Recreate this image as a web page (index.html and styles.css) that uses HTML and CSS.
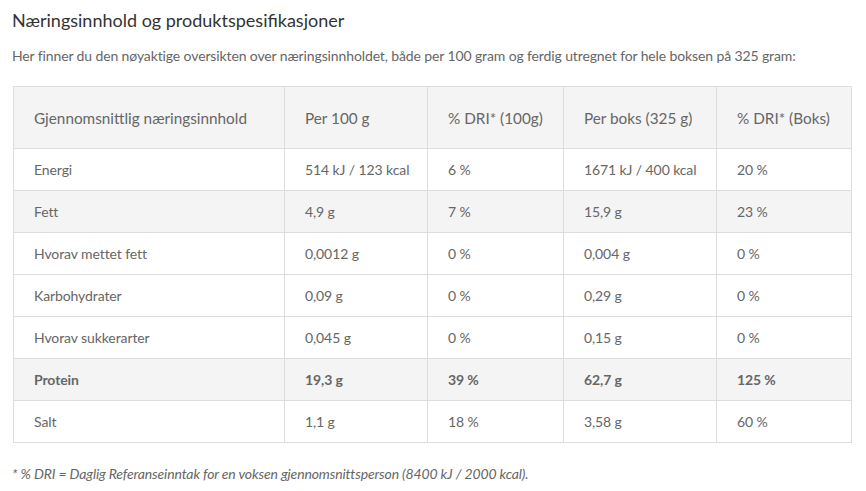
FILE: index.html
```html
<!DOCTYPE html>
<html lang="no">
<head>
<meta charset="utf-8">
<link rel="stylesheet" href="styles.css">
</head>
<body>
<div class="page">
  <h2 class="title">Næringsinnhold og produktspesifikasjoner</h2>
  <p class="intro">Her finner du den nøyaktige oversikten over næringsinnholdet, både per 100 gram og ferdig utregnet for hele boksen på 325 gram:</p>
  <table class="nutri">
    <colgroup>
      <col class="c1"><col class="c2"><col class="c3"><col class="c4"><col class="c5">
    </colgroup>
    <thead>
      <tr><th>Gjennomsnittlig næringsinnhold</th><th>Per 100 g</th><th>% DRI* (100g)</th><th>Per boks (325 g)</th><th>% DRI* (Boks)</th></tr>
    </thead>
    <tbody>
      <tr><td>Energi</td><td>514 kJ / 123 kcal</td><td>6 %</td><td>1671 kJ / 400 kcal</td><td>20 %</td></tr>
      <tr class="alt"><td>Fett</td><td>4,9 g</td><td>7 %</td><td>15,9 g</td><td>23 %</td></tr>
      <tr><td>Hvorav mettet fett</td><td>0,0012 g</td><td>0 %</td><td>0,004 g</td><td>0 %</td></tr>
      <tr><td>Karbohydrater</td><td>0,09 g</td><td>0 %</td><td>0,29 g</td><td>0 %</td></tr>
      <tr><td>Hvorav sukkerarter</td><td>0,045 g</td><td>0 %</td><td>0,15 g</td><td>0 %</td></tr>
      <tr class="alt strong"><td>Protein</td><td>19,3 g</td><td>39 %</td><td>62,7 g</td><td>125 %</td></tr>
      <tr><td>Salt</td><td>1,1 g</td><td>18 %</td><td>3,58 g</td><td>60 %</td></tr>
    </tbody>
  </table>
  <p class="note">* % DRI = Daglig Referanseinntak for en voksen gjennomsnittsperson (8400 kJ / 2000 kcal).</p>
</div>
</body>
</html>
```
FILE: styles.css
```css
html, body {
  margin: 0;
  padding: 0;
  background: #fff;
}
.page {
  padding: 0 13px 0 12px;
  font-family: Lato, "Open Sans", sans-serif;
  color: #666;
}
.title {
  margin: 0;
  padding-top: 8px;
  font-size: 18px;
  line-height: 24px;
  font-weight: 400;
  color: #333;
}
.intro {
  margin: 14px 0 0;
  font-size: 14px;
  line-height: 20px;
  letter-spacing: -0.12px;
  color: #666;
}
.nutri {
  margin: 20px 0 0 1px;
  width: 838px;
  border-collapse: collapse;
  table-layout: fixed;
  font-size: 14px;
  letter-spacing: -0.1px;
}
.c1 { width: 271px; }
.c2 { width: 143px; }
.c3 { width: 136px; }
.c4 { width: 153px; }
.c5 { width: 135px; }
.nutri th, .nutri td {
  border: 1px solid #ddd;
  text-align: left;
  padding: 0 20px;
  color: #666;
  white-space: nowrap;
}
.nutri th {
  height: 61px;
  font-weight: 400;
  font-size: 15.3px;
  letter-spacing: 0;
  background: #f4f4f4;
}
.nutri td {
  height: 41px;
}
.nutri tr.alt td {
  background: #f4f4f4;
}
.nutri tr.strong td {
  font-weight: 700;
}
.note {
  margin: 21px 0 0;
  font-size: 14px;
  line-height: 20px;
  letter-spacing: -0.14px;
  font-style: italic;
  color: #666;
}
```
